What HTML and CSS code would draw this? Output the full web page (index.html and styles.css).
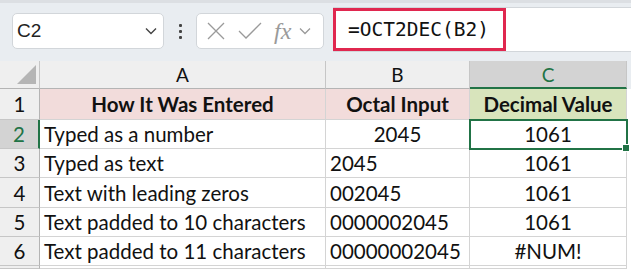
FILE: index.html
```html
<!DOCTYPE html>
<html lang="en">
<head>
    <meta charset="UTF-8">
    <title>OCT2DEC</title>
    <link rel="stylesheet" href="styles.css">
</head>
<body>
    <div class="toolbar">
        <div class="namebox">
            <span>C2</span>
            <svg class="chev" width="12" height="8" viewBox="0 0 12 8"><path d="M1 1.5 L6 6.5 L11 1.5" fill="none" stroke="#444" stroke-width="1.4"/></svg>
        </div>
        <div class="dots"><i></i><i></i><i></i></div>
        <div class="fxbox">
            <svg width="22" height="22" viewBox="0 0 22 22"><path d="M3 3 L19 19 M19 3 L3 19" stroke="#9a9a9a" stroke-width="1.3"/></svg>
            <svg width="26" height="22" viewBox="0 0 26 22"><path d="M2 11 L9 18 L24 3" fill="none" stroke="#9a9a9a" stroke-width="1.3"/></svg>
            <span class="fx">fx</span>
            <svg class="chev" width="12" height="8" viewBox="0 0 12 8"><path d="M1 1.5 L6 6.5 L11 1.5" fill="none" stroke="#9a9a9a" stroke-width="1.3"/></svg>
        </div>
        <div class="formula">
            <div class="formula-text">=OCT2DEC(B2)</div>
        </div>
    </div>

    <div class="sheet">
        <div class="hd corner"><span class="tri"></span></div>
        <div class="hd">A</div>
        <div class="hd">B</div>
        <div class="hd active-col">C</div>
        <div class="hd rest"></div>

        <div class="rn">1</div>
        <div class="c title">How It Was Entered</div>
        <div class="c title">Octal Input</div>
        <div class="c title green">Decimal Value</div>
        <div class="c blank"></div>

        <div class="rn active-row">2</div>
        <div class="c">Typed as a number</div>
        <div class="c mid">2045</div>
        <div class="c mid selected">1061<span class="handle"></span></div>
        <div class="c blank"></div>

        <div class="rn">3</div>
        <div class="c">Typed as text</div>
        <div class="c">2045</div>
        <div class="c mid">1061</div>
        <div class="c blank"></div>

        <div class="rn">4</div>
        <div class="c">Text with leading zeros</div>
        <div class="c">002045</div>
        <div class="c mid">1061</div>
        <div class="c blank"></div>

        <div class="rn">5</div>
        <div class="c">Text padded to 10 characters</div>
        <div class="c">0000002045</div>
        <div class="c mid">1061</div>
        <div class="c blank"></div>

        <div class="rn">6</div>
        <div class="c">Text padded to 11 characters</div>
        <div class="c">00000002045</div>
        <div class="c mid">#NUM!</div>
        <div class="c blank"></div>

        <div class="rn"></div>
        <div class="c"></div>
        <div class="c"></div>
        <div class="c"></div>
        <div class="c blank"></div>
    </div>
</body>
</html>
```

FILE: styles.css
```css
body {
    margin: 0;
    padding: 0;
    width: 631px;
    height: 269px;
    overflow: hidden;
    background-color: #fff;
    font-family: Lato, "Open Sans", sans-serif;
}

/* formula bar area */
.toolbar {
    height: 58px;
    border-top: 3px solid #dcdfe3;
    background-color: #e9edf1;
    display: flex;
    align-items: flex-start;
}

.namebox {
    margin: 10px 0 0 12px;
    width: 152px;
    height: 36px;
    box-sizing: border-box;
    background-color: #fff;
    border: 1px solid #d2d6da;
    border-radius: 5px;
    display: flex;
    align-items: center;
    justify-content: space-between;
    padding: 0 6px 0 4px;
    font-family: "Liberation Sans", Arial, sans-serif;
    font-size: 19px;
    color: #222;
}

.dots {
    width: 32px;
    height: 36px;
    margin-top: 10px;
    display: flex;
    flex-direction: column;
    align-items: center;
    justify-content: center;
    gap: 3px;
}

.dots i {
    display: block;
    width: 3px;
    height: 3px;
    background-color: #444;
    border-radius: 1px;
}

.fxbox {
    margin-top: 10px;
    width: 128px;
    height: 36px;
    box-sizing: border-box;
    background-color: #fff;
    border: 1px solid #d2d6da;
    border-radius: 5px;
    display: flex;
    align-items: center;
    gap: 10px;
    padding-left: 8px;
}

.fx {
    font-family: "Liberation Serif", serif;
    font-style: italic;
    font-size: 24px;
    color: #9a9a9a;
    margin-left: 1px;
    margin-right: -2px;
}

.formula {
    margin: 4px 0 0 9px;
    flex: 1;
    height: 43px;
    background-color: #fff;
    border: 1px solid #d2d6da;
    border-right: none;
}

.formula-text {
    box-sizing: border-box;
    width: 173px;
    height: 43px;
    border: 3px solid #e0274f;
    font-family: "DejaVu Sans Mono", monospace;
    font-size: 19.5px;
    line-height: 37px;
    padding-left: 12px;
    margin-top: 0;
    margin-left: -1px;
    color: #111;
}

/* the grid */
.sheet {
    display: grid;
    grid-template-columns: 40px 286px 144px 157px 4px;
    grid-template-rows: 28px 31px 29px 29px 30px 29px 29px 3px;
    font-size: 20.5px;
    color: #111;
}

.hd {
    background-color: #efefef;
    border-right: 1px solid #c6c6c6;
    border-bottom: 1px solid #b4b4b4;
    text-align: center;
    line-height: 28px;
    font-size: 19px;
    position: relative;
}

.hd.rest {
    background-color: #e9edf1;
    border: none;
}

.corner .tri {
    position: absolute;
    right: 3px;
    bottom: 4px;
    width: 0;
    height: 0;
    border-left: 19px solid transparent;
    border-bottom: 19px solid #b5b5b5;
}

.active-col {
    background-color: #d3d3d3;
    color: #217346;
    border-bottom: 2px solid #217346;
    line-height: 27px;
}

.rn {
    background-color: #efefef;
    border-right: 1px solid #b4b4b4;
    border-bottom: 1px solid #c6c6c6;
    display: flex;
    align-items: center;
    justify-content: center;
    font-size: 20.5px;
}

.active-row {
    background-color: #d3d3d3;
    color: #217346;
    border-right: 2px solid #217346;
}

.c {
    border-right: 1px solid #d4d4d4;
    border-bottom: 1px solid #d4d4d4;
    display: flex;
    align-items: center;
    padding-left: 4px;
    white-space: nowrap;
    position: relative;
}

.c.blank {
    border: none;
    padding: 0;
}

.mid {
    justify-content: center;
    padding-left: 0;
}

.title {
    background-color: #f2dcdb;
    font-weight: bold;
    justify-content: center;
    padding-left: 0;
}

.green {
    background-color: #d8e4bc;
}

.selected {
    outline: 2px solid #217346;
    outline-offset: -1px;
    z-index: 1;
}

.handle {
    position: absolute;
    right: -4px;
    bottom: -4px;
    width: 6px;
    height: 6px;
    background-color: #217346;
    border: 1px solid #fff;
}
```
